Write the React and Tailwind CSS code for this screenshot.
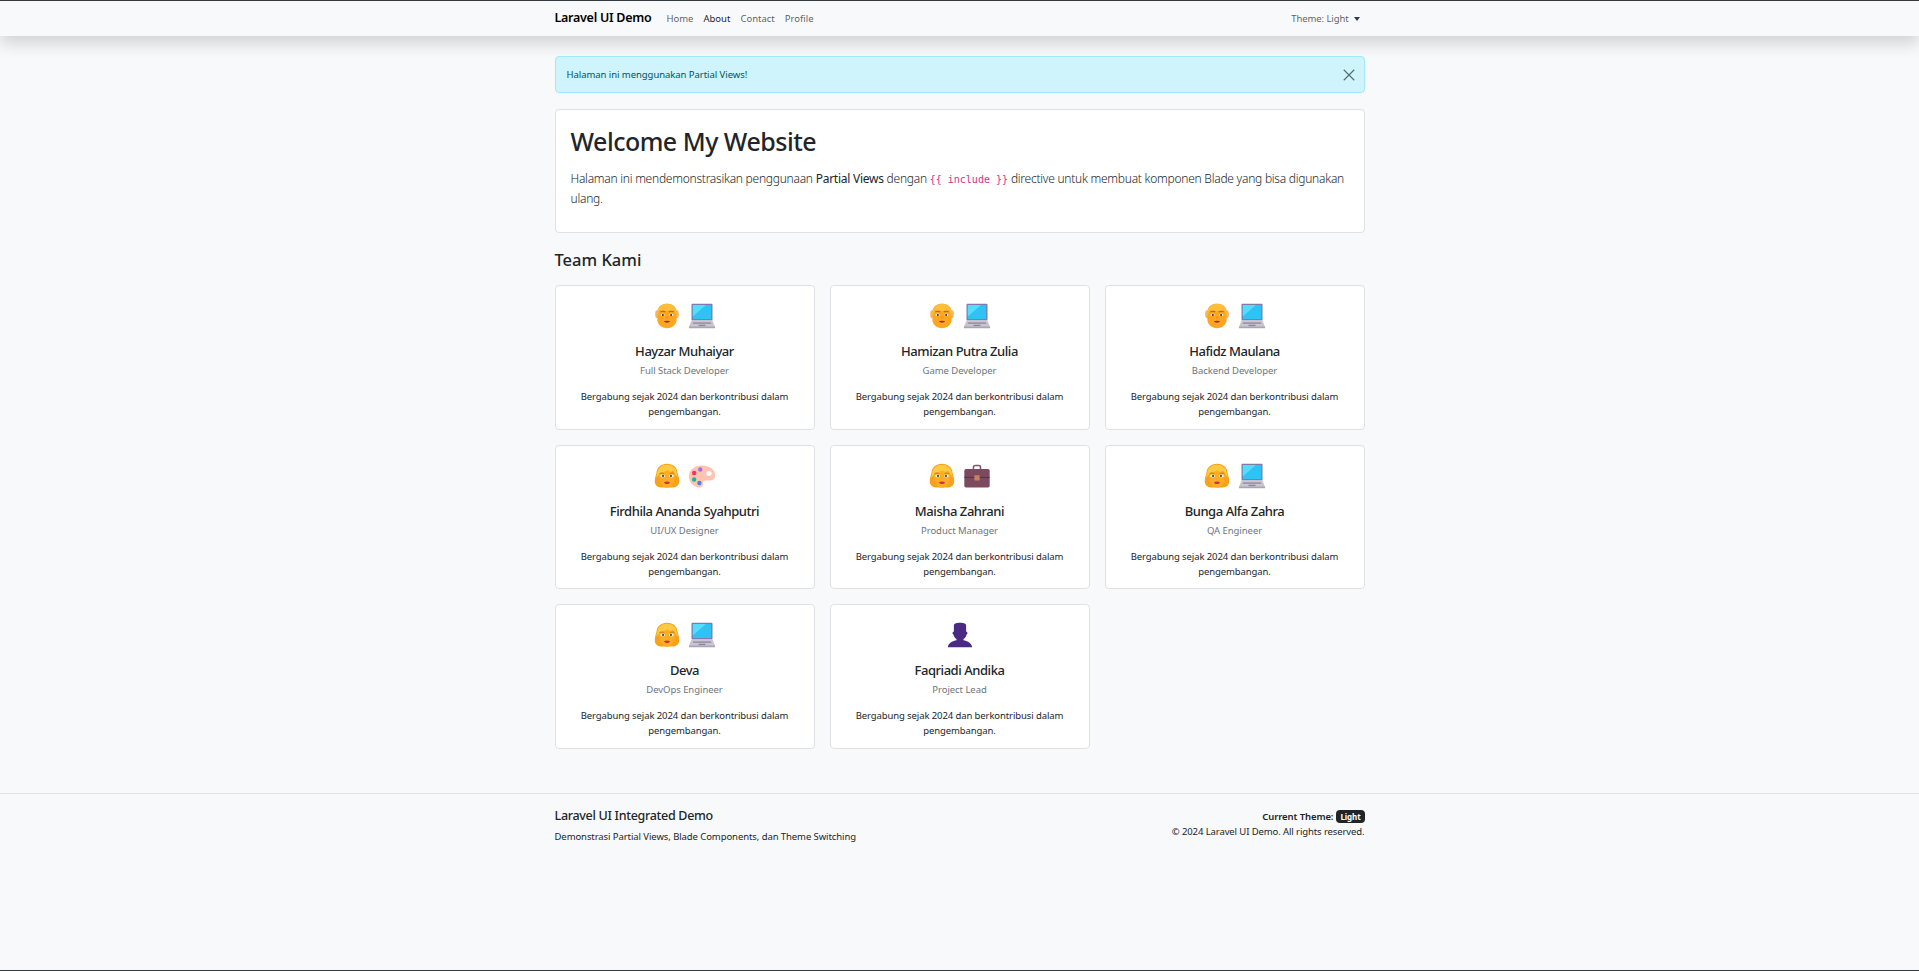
const team = [
  { name: "Hayzar Muhaiyar", role: "Full Stack Developer", icons: ["man", "laptop"] },
  { name: "Hamizan Putra Zulia", role: "Game Developer", icons: ["man", "laptop"] },
  { name: "Hafidz Maulana", role: "Backend Developer", icons: ["man", "laptop"] },
  { name: "Firdhila Ananda Syahputri", role: "UI/UX Designer", icons: ["woman", "palette"] },
  { name: "Maisha Zahrani", role: "Product Manager", icons: ["woman", "briefcase"] },
  { name: "Bunga Alfa Zahra", role: "QA Engineer", icons: ["woman", "laptop"] },
  { name: "Deva", role: "DevOps Engineer", icons: ["woman", "laptop"] },
  { name: "Faqriadi Andika", role: "Project Lead", icons: ["bust"] },
];

function ManIcon() {
  return (
    <svg viewBox="0 0 32 32" className="h-[28px] w-[28px]">
      <ellipse cx="4.500" cy="14" rx="2" ry="4.500" fill="#eeb76a" />
      <ellipse cx="27.500" cy="14" rx="2" ry="4.500" fill="#eeb76a" />
      <path d="M5 12C5 5 10 2 16 2s11 3 11 10v8c0 6-5 10-11 10S5 26 5 20z" fill="#ffa61f" />
      <path d="M5 16C4 7 9 2 16 2s12 5 11 14c-1-1.500-1.500-4-2.500-6.500-4 1-13 1-17 0C6.500 12 6 14.500 5 16z" fill="#fdbe3a" />
      <path d="M8.500 11.500c1.500-1 4-1 5.500 0M18 11.500c1.500-1 4-1 5.500 0" stroke="#b0652a" strokeWidth="1.300" fill="none" />
      <ellipse cx="11" cy="14.800" rx="2.400" ry="1.300" fill="#fff3dc" />
      <ellipse cx="21" cy="14.800" rx="2.400" ry="1.300" fill="#fff3dc" />
      <circle cx="11.300" cy="14.800" r="1.100" fill="#372128" />
      <circle cx="20.700" cy="14.800" r="1.100" fill="#372128" />
      <path d="M16 16.500v2.500" stroke="#e8871a" strokeWidth="1.200" />
      <path d="M12.500 22c2-.8 5-.8 7 0-1 2.200-6 2.200-7 0z" fill="#9c2a38" />
    </svg>
  );
}

function WomanIcon() {
  return (
    <svg viewBox="0 0 32 32" className="h-[28px] w-[28px]">
      <path d="M16 2C9 2 4.500 6 4 12 3.500 15 2 18 2 22c0 4 3 7 7 7h14c4 0 7-3 7-7 0-4-1.500-7-2-10C27.500 6 23 2 16 2z" fill="#f8a11a" />
      <path d="M16 3C10 3 5.500 6.500 5 12c-.3 2-1 4-1.500 6 2-2 3.500-4 5.500-6 4 1 10 .5 14-2 1.500 3 3.500 5.500 5.500 8-.5-2-1.200-4-1.500-6C26.500 6.500 22 3 16 3z" fill="#fdca42" />
      <path d="M16 9.500c-2 1.500-5 2.500-9 3-1 9 3 17 9 17s10-8 9-17c-3.500-.5-7-1.500-9-3z" fill="#ffad20" />
      <path d="M7.500 13.500c1.500-1 4-1 5.500 0M19 13.500c1.500-1 4-1 5.500 0" stroke="#b8742c" strokeWidth="1" fill="none" />
      <ellipse cx="11" cy="16" rx="2.800" ry="1.700" fill="#fff3dc" />
      <ellipse cx="21" cy="16" rx="2.800" ry="1.700" fill="#fff3dc" />
      <circle cx="11.500" cy="16" r="1.300" fill="#3f5a4a" />
      <circle cx="20.500" cy="16" r="1.300" fill="#3f5a4a" />
      <path d="M12.500 23c2-1 5-1 7 0-1 3-6 3-7 0z" fill="#c8364c" />
    </svg>
  );
}

function LaptopIcon() {
  return (
    <svg viewBox="0 0 32 32" className="h-[28px] w-[28px]">
      <rect x="4" y="2" width="24" height="19" rx="1" fill="#7d7ba8" />
      <rect x="5.500" y="3.500" width="21" height="16" fill="#2fc2f5" />
      <path d="M5.500 3.500h15l-15 13z" fill="#55dcff" />
      <path d="M4 21h24l3 7.500H1z" fill="#c9c6d2" />
      <rect x="1" y="28" width="30" height="2" rx="1" fill="#a9a5b8" />
      <path d="M6 23h20l.8 2H5.200z" fill="#9b97a8" />
      <rect x="12" y="26" width="8" height="1.500" fill="#8c8899" />
    </svg>
  );
}

function PaletteIcon() {
  return (
    <svg viewBox="0 0 32 32" className="h-[28px] w-[28px]">
      <path d="M16 4C7 4 1 9.500 1 16.500S7 29 13 29c4 0 4-3 4-5s1-3 4-3h4c4 0 6-2 6-6C31 8 24 4 16 4z" fill="#ffc4b0" />
      <ellipse cx="24" cy="13" rx="3" ry="2.800" fill="#ffffff" />
      <circle cx="14" cy="8.500" r="2.500" fill="#a56bf0" />
      <circle cx="7" cy="12.500" r="2.500" fill="#f92f60" />
      <circle cx="7" cy="20" r="2.500" fill="#12b5a6" />
      <circle cx="13" cy="24" r="2.500" fill="#4a7ff0" />
    </svg>
  );
}

function BriefcaseIcon() {
  return (
    <svg viewBox="0 0 32 32" className="h-[28px] w-[28px]">
      <path d="M12 8V5.500C12 4.500 13 4 14 4h4c1 0 2 .5 2 1.500V8" stroke="#7d5a6a" strokeWidth="1.800" fill="none" />
      <rect x="1.500" y="8" width="29" height="21" rx="2" fill="#7c4a5e" />
      <rect x="1.500" y="17" width="29" height="1.200" fill="#5c3348" />
      <rect x="13" y="15" width="6" height="6" rx=".8" fill="#c9835c" />
    </svg>
  );
}

function BustIcon() {
  return (
    <svg viewBox="0 0 32 32" className="h-[28px] w-[28px]">
      <path d="M9 5c0-2 3-3 7-3s7 1 7 3v7l1 .5c.8.400.8 2.500-.5 2.800C23 18 21 20 20 20.500V22c4 .5 9 3 10 8H2c1-5 6-7.500 10-8v-1.500c-1-.5-3-2.500-3.500-5.200C7.200 15 7.200 12.900 8 12.500L9 12z" fill="#4a2a82" />
    </svg>
  );
}

const iconMap = {
  man: ManIcon,
  woman: WomanIcon,
  laptop: LaptopIcon,
  palette: PaletteIcon,
  briefcase: BriefcaseIcon,
  bust: BustIcon,
};

function TeamCard({ member }) {
  return (
    <div className="flex h-[144.6px] flex-col items-center rounded-[4px] border border-[#dee2e6] bg-white px-4 pt-[13px] text-center">
      <div className="flex h-[34px] items-center justify-center gap-[7px]">
        {member.icons.map((name, i) => {
          const Icon = iconMap[name];
          return <Icon key={i} />;
        })}
      </div>
      <h5 className="mt-[8px] text-[13px] leading-[20px] font-medium tracking-[-0.45px] text-[#212529]">{member.name}</h5>
      <p className="mt-[1px] text-[9.5px] leading-[18px] tracking-[-0.05px] text-[#6c757d]">{member.role}</p>
      <p className="mt-[9px] text-[9.5px] leading-[15px] tracking-[-0.1px] text-[#212529]">
        Bergabung sejak 2024 dan berkontribusi dalam pengembangan.
      </p>
    </div>
  );
}

export default function App() {
  return (
    <div className="flex h-[971px] flex-col overflow-hidden border-y border-[#343a40] bg-[#f8f9fa] font-['Noto_Sans',sans-serif] text-[#212529]">
      <nav className="relative h-[35px] shrink-0 bg-[#f8f9fa] shadow-[0_8px_16px_rgba(0,0,0,0.15)]">
        <div className="mx-auto flex h-full w-[810px] items-center">
          <span className="text-[12.5px] font-semibold tracking-[-0.27px] text-black">Laravel UI Demo</span>
          <div className="ml-[15px] flex gap-[10px] pt-px text-[9.5px] text-[#000000a6]">
            <span>Home</span>
            <span className="text-black/90">About</span>
            <span>Contact</span>
            <span>Profile</span>
          </div>
          <div className="ml-auto mr-[5px] flex items-center gap-[5px] pt-px text-[9.5px] tracking-[-0.1px] text-[#000000a6]">
            <span>Theme: Light</span>
            <span className="h-0 w-0 border-x-[3px] border-t-[4px] border-x-transparent border-t-[#343a40]" />
          </div>
        </div>
      </nav>

      <main className="mx-auto w-[810px] pt-[20px]">
        <div className="flex h-[37px] items-center justify-between rounded-[4px] border border-[#9eeaf9] bg-[#cff4fc] pl-[11px] pr-[9px] pt-px text-[9.5px] tracking-[-0.05px] text-[#055160]">
          <span>Halaman ini menggunakan Partial Views!</span>
          <svg viewBox="0 0 16 16" className="h-[12px] w-[12px]">
            <path d="M1 1l14 14M15 1L1 15" stroke="#4f6b76" strokeWidth="1.500" />
          </svg>
        </div>

        <section className="mt-[16px] h-[124px] rounded-[4px] border border-[#dee2e6] bg-white px-[15px] pt-[14px]">
          <h1 className="text-[25px] leading-[34px] font-medium tracking-[-0.5px]">Welcome My Website</h1>
          <p className="mt-[11px] text-[12px] leading-[20px] font-light tracking-[-0.25px]">
            Halaman ini mendemonstrasikan penggunaan <span className="font-normal">Partial Views</span> dengan{" "}
            <code className="font-['DejaVu_Sans_Mono',monospace] text-[10px] leading-none tracking-normal text-[#d63384]">{"{{ include }}"}</code>{" "}
            directive untuk membuat komponen Blade yang bisa digunakan ulang.
          </p>
        </section>

        <h3 className="mt-[15px] text-[16.5px] leading-[24px] font-medium">Team Kami</h3>

        <div className="mt-[13px] grid grid-cols-3 gap-x-[15px] gap-y-[15px]">
          {team.map((member) => (
            <TeamCard key={member.name} member={member} />
          ))}
        </div>
      </main>

      <footer className="mt-[44px] border-t border-[#dee2e6]">
        <div className="mx-auto flex w-[810px] justify-between pt-[13px]">
          <div>
            <h6 className="text-[12.5px] leading-[18px] font-medium tracking-[-0.3px]">Laravel UI Integrated Demo</h6>
            <p className="mt-[5px] text-[9.5px] leading-[14px] tracking-[-0.08px]">Demonstrasi Partial Views, Blade Components, dan Theme Switching</p>
          </div>
          <div className="pt-[2px] text-right text-[9.5px] leading-[15px] tracking-[-0.1px]">
            <div className="flex items-center justify-end gap-[3px]">
              <span className="font-semibold">Current Theme:</span>
              <span className="rounded-[4px] bg-[#212529] px-[4px] text-[8px] leading-[13px] font-bold text-white">Light</span>
            </div>
            <p>© 2024 Laravel UI Demo. All rights reserved.</p>
          </div>
        </div>
      </footer>
    </div>
  );
}
